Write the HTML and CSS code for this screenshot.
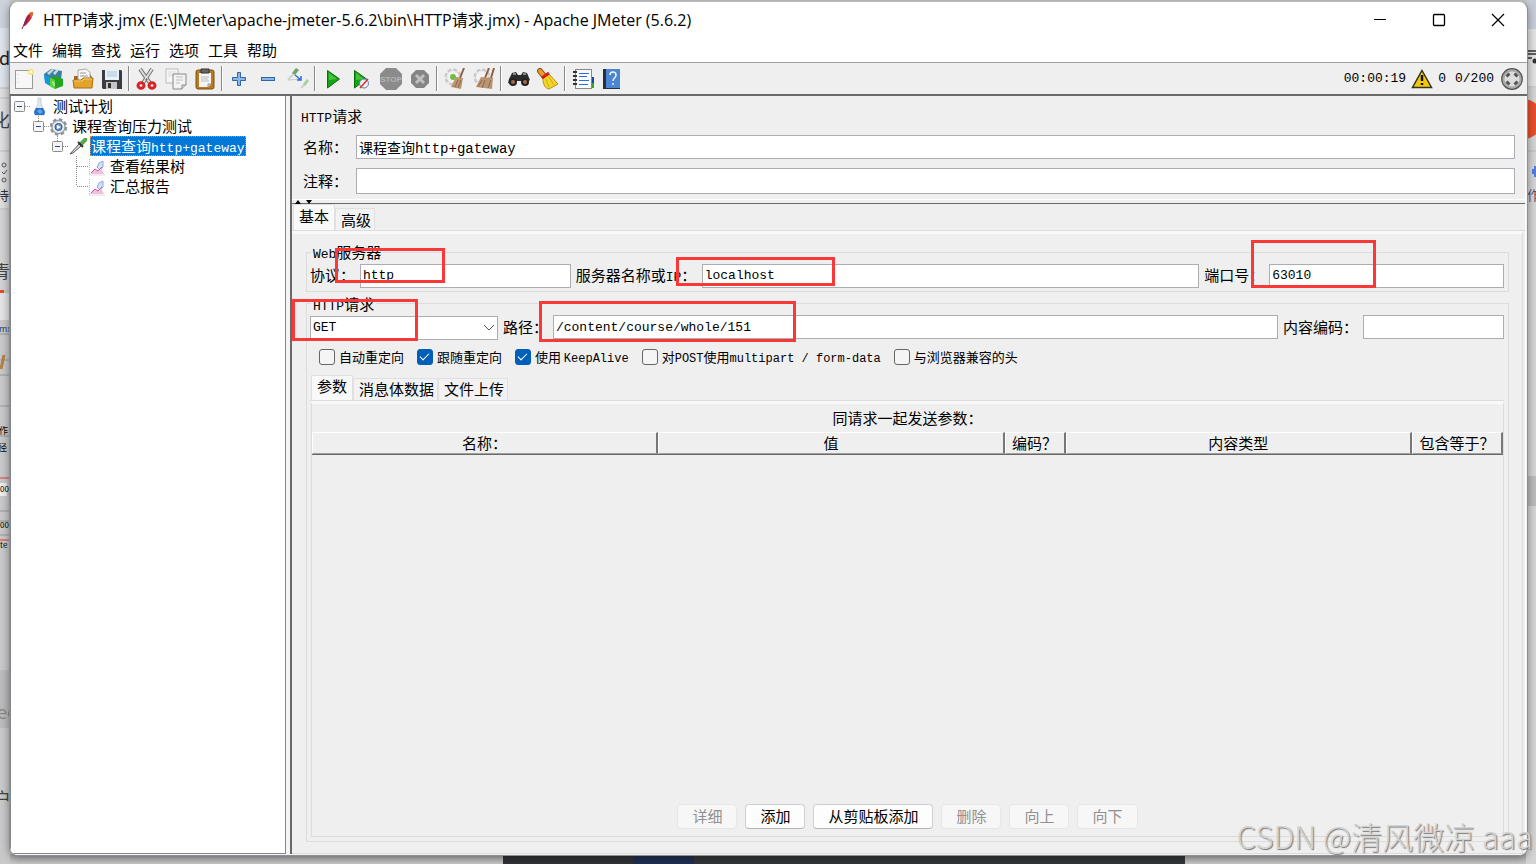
FILE: index.html
```html
<!DOCTYPE html>
<html lang="zh-CN">
<head>
<meta charset="utf-8">
<title>HTTP请求.jmx - Apache JMeter (5.6.2)</title>
<link rel="stylesheet" href="styles.css">
</head>
<body>
<svg class="edge edge-left" width="10" height="864" aria-hidden="true">
  <rect width="10" height="864" fill="#c9c9c9"/>
  <rect width="10" height="28" fill="#cdd2dc"/><rect y="28" width="10" height="60" fill="#dfe3eb"/>
  <rect y="88" width="10" height="122" fill="#dedede"/><path d="M0 88h10M0 98h10M0 151h10M0 209h10" stroke="#bbb"/>
  <rect y="210" width="10" height="80" fill="#d3d3d3"/><rect y="293" width="10" height="27" fill="#e4e4e4"/>
  <rect y="290" width="4" height="3" fill="#e2492f"/>
  <text x="-1" y="65" font-size="18" fill="#222">d</text><text x="-8" y="127" font-size="18" fill="#444">化</text>
  <text x="-4" y="200" font-size="13" fill="#333">待</text><text x="-7" y="278" font-size="17" fill="#444">青</text>
  <g fill="none" stroke="#555"><circle cx="4" cy="165" r="2"/><path d="m2 172 2 2 3-4"/><circle cx="4" cy="180" r="2"/></g>
  <text x="-1" y="332" font-size="9" fill="#24497a">mx</text>
  <path d="M0 334h9M0 360h9M0 375h9M0 406h9M0 436h9M0 511h9M0 521h9M0 535h9" stroke="#999"/>
  <path d="m1 369 3-14" stroke="#b48244" stroke-width="3"/>
  <text x="-1" y="434" font-size="9">作</text><text x="-2" y="451" font-size="9">径</text>
  <rect y="483" width="7" height="13" fill="#eee"/><text x="0" y="492" font-size="8">00</text><text x="0" y="528" font-size="8">00</text>
  <path d="M0 478h9M0 540h9" stroke="#ed3b3b"/><text y="548" font-size="8">te</text>
  <rect y="670" width="10" height="58" fill="#bcbcbc"/><text x="-3" y="719" font-size="18" fill="#888">ee</text>
  <text x="-7" y="806" font-size="18" fill="#444">户</text>
</svg>
<svg class="edge edge-right" width="10" height="864" aria-hidden="true">
  <rect width="10" height="864" fill="#d5d5d5"/><rect width="10" height="29" fill="#c8ced9"/><rect y="29" width="10" height="59" fill="#e3e3e3"/>
  <path d="M1 51h9M1 54h9M1 58h5" stroke="#333" stroke-width="1.5"/><circle cx="9" cy="61" r="2.5" fill="#333"/>
  <path d="M0 87h10M0 151h10" stroke="#bbb"/><circle cx="-3" cy="119" r="20" fill="#e84e2c"/>
  <path d="M7 169v5M9 166v11" stroke="#4f7ee0" stroke-width="2"/><text x="1" y="200" font-size="13" fill="#684a69">作</text>
  <rect y="476" width="10" height="30" fill="#bcbcbc"/>
</svg>
<div class="edge edge-bottom" aria-hidden="true"><span class="dark-sheet"></span></div>

<main class="window">
  <header class="titlebar">
    <svg class="feather" width="18" height="20" viewBox="0 0 18 20"><path d="M5 16c0-5 2-10 6-13l3-1c0 4-2 8-6 12l-2 2z" fill="#c5283d"/><path d="M10 4c1-2 2-2 4-2 0 3-1 4-2 6z" fill="#e5632b"/><path d="M5 16 7 10l3-5-2 7-2 3" fill="#722a7c"/><path d="m3 19 3-7 5-7" fill="none" stroke="#762341"/></svg>
    <h1>HTTP请求.jmx (E:\JMeter\apache-jmeter-5.6.2\bin\HTTP请求.jmx) - Apache JMeter (5.6.2)</h1>
    <div class="caption-buttons">
      <button aria-label="最小化"><svg width="14" height="14"><path d="M1 6.500h12" stroke="#000"/></svg></button>
      <button aria-label="最大化"><svg width="14" height="14"><rect x="1.500" y="1.500" width="11" height="11" rx="1" fill="none" stroke="#000" stroke-width="1.300"/></svg></button>
      <button aria-label="关闭"><svg width="14" height="14"><path d="m1 1 12 12M13 1 1 13" stroke="#000" stroke-width="1.200"/></svg></button>
    </div>
  </header>
  <nav class="menubar"><button>文件</button><button>编辑</button><button>查找</button><button>运行</button><button>选项</button><button>工具</button><button>帮助</button></nav>

  <div class="toolbar">
    <button aria-label="新建"><svg viewBox="0 0 22 22"><rect x="1.500" y="2.500" width="17" height="18" fill="#f7f7f7" stroke="#999"/><path d="M4 6v11" stroke="#ccc" stroke-dasharray="1 3"/><circle cx="17" cy="4" r="3" fill="#f6e46b"/><circle cx="17" cy="4" r="1.500" fill="#fffce0"/></svg></button>
    <button aria-label="模板"><svg viewBox="0 0 22 22"><path d="m1 6 7-5 11 2-1 9-8 4-8-4z" fill="#3a7f9f"/><path d="m4 5 5-4 2 1-5 5zM10 5l4-4 2 1-4 5z" fill="#c7d8de"/><path d="m1 7 6 2v9l-5-3z" fill="#1598d8"/><path d="m7 10 6-2 7 3v7l-8 3-5-3z" fill="#23a51d"/><path d="m7 10 5 2v9l-5-3z" fill="#5bd43d"/><path d="m9 14 2 1v3" stroke="#eee" fill="none"/></svg></button>
    <button aria-label="打开"><svg viewBox="0 0 22 22"><path d="M2 8h4l2-2h10l2 3v9H2z" fill="#9a6a20"/><path d="m6 2 8-1 4 3v9H6z" fill="#f5f5f5" stroke="#aaa"/><path d="M8 5h6M8 8h8" stroke="#999"/><path d="M1 12h8l2-2h10l-1 10H2z" fill="#e2a42c" stroke="#aa7015"/><path d="M2 13h8l2-2h8" stroke="#f6cc6e" fill="none"/></svg></button>
    <button aria-label="保存"><svg viewBox="0 0 22 22"><path d="M1 2h19l1 1v18H2l-1-1z" fill="#3a3c42"/><rect x="4" y="2" width="14" height="10" fill="#e8f1f9"/><path d="M6 4h10M6 6h10M6 8h10" stroke="#acc5d9"/><rect x="5" y="14" width="11" height="7" fill="#c4c5c8"/><rect x="7" y="15" width="3" height="5" fill="#333"/></svg></button>
    <i class="sep"></i>
    <button aria-label="剪切"><svg viewBox="0 0 22 22"><path d="m4 1 10 14M16 1 7 15" stroke="#777" stroke-width="4"/><path d="m4 1 10 14M16 1 7 15" stroke="#ddd" stroke-width="2"/><g fill="none" stroke="#d82227" stroke-width="3"><ellipse cx="5" cy="17.500" rx="3" ry="2.700"/><ellipse cx="16" cy="17.500" rx="3" ry="2.700"/></g><circle cx="10.500" cy="11.500" r="1" fill="#555"/></svg></button>
    <button aria-label="复制"><svg viewBox="0 0 22 22"><path d="M1 1h12v14H1z" fill="#f6f6f6" stroke="#bbb"/><path d="M3 4h8M3 6h8M3 8h8" stroke="#ddd"/><path d="M8 6h13v11l-4 4H8z" fill="#f3f3f3" stroke="#888"/><path d="M11 9h7M11 12h7M11 15h4" stroke="#bbb"/><path d="M17 21v-4h4" fill="#ddd" stroke="#888"/></svg></button>
    <button aria-label="粘贴"><svg viewBox="0 0 22 22"><rect x="2" y="2" width="18" height="19" rx="2" fill="#b97b21" stroke="#825112"/><path d="M5 5h12v11l-3 3H5z" fill="#f5f5f5"/><path d="M7 1h8v4H7z" fill="#666" stroke="#333"/><path d="M7 9h8M7 11h7M7 13h8" stroke="#bbb"/><path d="M14 19v-3h3" fill="#ccc" stroke="#999"/></svg></button>
    <i class="sep"></i>
    <button aria-label="展开"><svg viewBox="0 0 22 22"><path d="M8.500 4.500h3v5h5v3h-5v5h-3v-5h-5v-3h5z" fill="#8db5e5" stroke="#2f65ad"/></svg></button>
    <button aria-label="折叠"><svg viewBox="0 0 22 22"><rect x="3.500" y="9.500" width="13" height="3" fill="#8db5e5" stroke="#2f65ad"/></svg></button>
    <button aria-label="切换"><svg viewBox="0 0 22 22"><path d="M1 12 7 5" stroke="#d0d4ce" stroke-width="2"/><path d="m5 5 4-5 3 2-4 5z" fill="#6aa667"/><path d="m1 12 13-1" stroke="#ccc"/><path d="m8 7 6 5m0-4v4h-4" stroke="#286ee4" fill="none" stroke-width="1.500"/><path d="m14 20 4-4" stroke="#cdd2cb" stroke-width="2"/><path d="m16 16 4-5 2 2-4 5z" fill="#a9cba6"/></svg></button>
    <i class="sep"></i>
    <button aria-label="启动"><svg viewBox="0 0 22 22"><path d="m5.500 2.500 12 8.500-12 9z" fill="#15a315" stroke="#07700b"/><path d="m7 5 8 6-8 1z" fill="#47c33b"/></svg></button>
    <button aria-label="不停顿开始"><svg viewBox="0 0 22 22"><path d="m3.500 2.500 12 8.500-12 9z" fill="#15a315" stroke="#07700b"/><path d="m5 5 8 6-8 1z" fill="#47c33b"/><circle cx="13" cy="15.500" r="4.500" fill="#eaf0f6" stroke="#5481b2"/><path d="m9 20 8-9" stroke="#e22b2b" stroke-width="1.500"/></svg></button>
    <button aria-label="停止" disabled><svg viewBox="0 0 22 22"><path d="M6 0h10l6 6v10l-6 6H6l-6-6V6z" fill="#8b8b8b"/><text x="11" y="14" font-size="8" font-weight="700" text-anchor="middle" fill="#b5b5b5">STOP</text></svg></button>
    <button aria-label="关闭线程" disabled><svg viewBox="0 0 22 22"><path d="M7 2h8l5 5v8l-5 5H7l-5-5V7z" fill="#858585"/><path d="m7 7 8 8m0-8-8 8" stroke="#c0c0c0" stroke-width="3"/></svg></button>
    <i class="sep"></i>
    <button aria-label="清除"><svg viewBox="0 0 22 22"><use href="#gear-pale"/><circle cx="9" cy="9" r="3" fill="#73be3c"/><path d="m20 0-4 10" stroke="#8c6345" stroke-width="2"/><path d="m12 9 7 1-2 11-10-2z" fill="#bb9572"/><path d="m14 12-3 7m6-7-3 8" stroke="#8d6a4d"/></svg></button>
    <button aria-label="清除全部"><svg viewBox="0 0 22 22"><use href="#gear-pale"/><path d="m16 0-4 10M21 0l-3 10" stroke="#8c6345" stroke-width="2"/><path d="m8 9 12 1-1 11-16-2z" fill="#bb9572"/><path d="m9 12-4 7m7-7-3 8m9-8-3 8" stroke="#8d6a4d"/></svg></button>
    <i class="sep"></i>
    <button aria-label="查找"><svg viewBox="0 0 22 22"><path d="m1 11 3-6 4-1 2 3h3l2-3 4 1 3 7-4 3-5-2h-4l-5 3-4-1z" fill="#2c2c2c"/><path d="M5 6h3m7 0h3" stroke="#888" stroke-width="2"/><circle cx="5" cy="14" r="4" fill="#222"/><circle cx="17" cy="14" r="4" fill="#222"/><circle cx="5" cy="14" r="2" fill="#a46a4a"/><circle cx="17" cy="14" r="2" fill="#a46a4a"/></svg></button>
    <button aria-label="重置查找"><svg viewBox="0 0 22 22"><path d="m3 3 4 5" stroke="#8d4b16" stroke-width="6" stroke-linecap="round"/><path d="m3 3 4 5" stroke="#e99d2c" stroke-width="4" stroke-linecap="round"/><path d="M6 10 12 6l9 10-9 5c-5-1-6-6-6-11" fill="#f3d429" stroke="#b79417"/><path d="m5 10 7-5" stroke="#d51f19" stroke-width="3"/><path d="m9 11 3 8m0-10 5 8" stroke="#d4ad18"/></svg></button>
    <i class="sep"></i>
    <button aria-label="函数助手"><svg viewBox="0 0 22 22"><rect x="3.500" y="1.500" width="16" height="19" fill="#fafafa" stroke="#888"/><path d="M1 4h4M1 8h4M1 12h4M1 16h4" stroke="#333" stroke-width="2"/><path d="M7 5.500h10M7 8.500h8M7 12.500h10M7 16.500h9" stroke="#286ee4"/><path d="M21 9v6" stroke="#1746ad" stroke-width="2"/><path d="M21 15v5" stroke="#38a321" stroke-width="2"/></svg></button>
    <button aria-label="帮助"><svg viewBox="0 0 22 22"><path d="M2 1h17v20H2z" fill="#252f3f"/><path d="M5 1h14v19H5z" fill="#4c86d2"/><path d="M9 7c0-4 6-4 6 0 0 3-3 3-3 6m0 2v2" stroke="#e9f3ff" stroke-width="1.500" fill="none"/></svg></button>
    <div class="run-status">
      <span>00:00:19</span>
      <svg width="22" height="20" viewBox="0 0 22 20"><path d="m11 1.500 9.500 17h-19z" fill="#f4c90c" stroke="#313416" stroke-width="1.500"/><path d="M11 6v6m0 2v2" stroke="#111" stroke-width="2.500"/></svg>
      <span>0</span><span>0/200</span>
      <svg class="remote" width="22" height="22" viewBox="0 0 22 22"><circle cx="11" cy="11" r="10.300" fill="#aaa" stroke="#555" stroke-width="1.200"/><circle cx="11" cy="11" r="7.500" fill="#ddd"/><g stroke="#555" stroke-width="3"><path d="m5.500 8.500 3-3M13.500 5.500l3 3M5.500 13.500l3 3M13.500 16.500l3-3"/></g></svg>
    </div>
  </div>

  <div class="workspace">
    <aside class="tree">
      <div class="node"><svg class="branch"><use href="#expander"/></svg><svg class="node-icon" viewBox="0 0 19 20"><path d="M7 2h3v6l4 8-1 3H4l-1-3 4-8z" fill="#dfe8f4" stroke="#c5cedb"/><path d="M5 12h7l2 4-1 3H4l-1-3z" fill="#2873ca"/><path d="m6 15 3-2 3 3-3 2z" fill="#62a6ee"/></svg><span>测试计划</span></div>
      <div class="node level-1"><svg class="branch"><path d="M5.500 0v5" class="dots"/><use href="#expander"/></svg><svg class="node-icon" viewBox="0 0 19 20"><circle cx="8.500" cy="11" r="7.500" fill="#c6cbd1" stroke="#8d9399" stroke-width="2.500" stroke-dasharray="3.500 2.400"/><circle cx="8.500" cy="11" r="6.500" fill="#e6e9ee" stroke="#89929d"/><circle cx="8.500" cy="11" r="3.500" fill="#769bcb" stroke="#31517d"/><path d="m7 9 4 2-4 2z" fill="#fff"/></svg><span>课程查询压力测试</span></div>
      <div class="node level-2"><svg class="branch"><path d="M5.500 0v5" class="dots"/><use href="#expander"/></svg><svg class="node-icon" viewBox="0 0 19 20"><path d="m1 18 9-10 2 2-8 7z" fill="#d5d7d8" stroke="#5a5a5a"/><path d="m10 7 5-5 3 0 0 3-5 5z" fill="#58a84c"/><path d="m9 6 5 5" stroke="#333" stroke-width="2"/></svg><span class="selected">课程查询<b class="latin">http+gateway</b></span></div>
      <div class="node level-3"><svg class="branch"><path d="M5.500 0v20M6 10.500h12" class="dots"/></svg><svg class="node-icon"><use href="#chart"/></svg><span>查看结果树</span></div>
      <div class="node level-3"><svg class="branch"><path d="M5.500 0v10M6 10.500h12" class="dots"/></svg><svg class="node-icon"><use href="#chart"/></svg><span>汇总报告</span></div>
    </aside>

    <section class="editor">
      <div class="identity">
        <h2><b class="latin">HTTP</b>请求</h2>
        <div class="name-row"><label for="name">名称：</label><input id="name" class="mixed" value="课程查询http+gateway"></div>
        <div class="name-row comment"><label for="comment">注释：</label><input id="comment"></div>
      </div>
      <div class="splitter"><svg width="18" height="4"><path d="m1 4 3-4 3 4zM12 0h6l-3 4z"/></svg></div>
      <div class="tabs"><button class="active">基本</button><button>高级</button></div>
      <div class="basic-pane">
        <fieldset>
          <legend><b class="latin">Web</b>服务器</legend>
          <div class="field-row">
            <label for="protocol" class="protocol-label">协议：</label><div class="field protocol"><input id="protocol" value="http"><i class="mark mark-protocol"></i></div>
            <label for="server" class="server-label">服务器名称或<b class="latin">IP</b>：</label><div class="field server"><input id="server" value="localhost"><i class="mark mark-server"></i></div>
            <label for="port" class="port-label">端口号：</label><div class="field port"><input id="port" value="63010"><i class="mark mark-port"></i></div>
          </div>
        </fieldset>
        <fieldset class="request">
          <legend><b class="latin">HTTP</b>请求</legend>
          <div class="field-row">
            <div class="field method"><select aria-label="方法"><option>GET</option></select><svg class="chevron" width="10" height="6"><path d="m0 0 5 5 5-5" fill="none" stroke="#555"/></svg><i class="mark mark-method"></i></div>
            <label for="path" class="path-label">路径：</label><div class="field path"><input id="path" value="/content/course/whole/151"><i class="mark mark-path"></i></div>
            <label for="encoding" class="encoding-label">内容编码：</label><div class="field encoding"><input id="encoding"></div>
          </div>
          <div class="options">
            <label><input type="checkbox">自动重定向</label>
            <label><input type="checkbox" checked>跟随重定向</label>
            <label><input type="checkbox" checked><span>使用 <b class="latin">KeepAlive</b></span></label>
            <label><input type="checkbox"><span>对<b class="latin">POST</b>使用<b class="latin">multipart / form-data</b></span></label>
            <label><input type="checkbox">与浏览器兼容的头</label>
          </div>
          <div class="tabs inner"><button class="active">参数</button><button>消息体数据</button><button>文件上传</button></div>
          <div class="params">
            <p>同请求一起发送参数：</p>
            <table>
              <colgroup><col><col><col class="col-encode"><col><col class="col-equals"></colgroup>
              <thead><tr><th>名称：</th><th>值</th><th>编码？</th><th>内容类型</th><th>包含等于？</th></tr></thead>
            </table>
            <div class="actions"><button disabled>详细</button><button>添加</button><button>从剪贴板添加</button><button disabled>删除</button><button disabled>向上</button><button disabled>向下</button></div>
          </div>
        </fieldset>
      </div>
    </section>
  </div>
</main>
<div class="watermark">CSDN @清风微凉 aaa</div>

<svg width="0" height="0" class="symbols" aria-hidden="true"><defs>
  <g id="expander"><rect x=".5" y="5.500" width="10" height="10" rx="1" fill="#f5f5f5" stroke="#8a8a8a"/><path d="M3 10.500h5" stroke="#25489a"/><path d="M11 10.500h6" stroke="#888" stroke-dasharray="1 1"/></g>
  <g id="chart"><path d="M1.500 3v16H17" stroke="#bbb" stroke-dasharray="1 1" fill="none"/><path d="m9 11 2-4 4-2v6l-3 3z" fill="#cfe0f7" stroke="#8fabdb"/><path d="m2 18 5-5 3 2 3-3 3 6z" fill="#f3c0e0"/><path d="m3 17 4-4 3 2 4-4" stroke="#cf5799" fill="none"/></g>
  <g id="gear-pale"><circle cx="9" cy="9" r="7" fill="#f2f2f2" stroke="#c6c6c6" stroke-width="3" stroke-dasharray="3.500 2"/><circle cx="9" cy="9" r="6.500" fill="#f2f2f2" stroke="#d2d2d2"/></g>
</defs></svg>
</body>
</html>
```

FILE: styles.css
```css
* { box-sizing: border-box; }
body {
  margin: 0; height: 100vh; min-height: 600px; display: flex; padding: 1px 8px 8px 9px;
  position: relative; overflow: hidden; background: #c9c9c9; color: #000;
  font: 15px/20px "Noto Sans CJK SC", sans-serif;
}
button, input, select { font: inherit; color: inherit; margin: 0; }
button { padding: 0; border: 0; background: none; }
h1, h2, p { margin: 0; font-weight: 400; }
svg { display: block; flex: none; }
.latin { font: 400 13px/1 "Liberation Mono", monospace; }
.edge { position: absolute; top: 0; }
.edge-left { left: 0; }
.edge-right { right: 0; }
.edge-bottom { top: auto; bottom: 0; left: 10px; right: 10px; height: 10px; background: linear-gradient(#aaa, #c9c9c9); }
.dark-sheet { display: block; width: 45%; height: 10px; margin-left: 32.5%; background: linear-gradient(90deg, #303236 19%, #202f52 19% 28%, #34373a 28%); }
.symbols { position: absolute; }

.window {
  position: relative; flex: 1; min-width: 0; display: flex; flex-direction: column; overflow: hidden;
  background: #fff; border: 1px solid #8d8d92; border-top-color: #bbb; border-radius: 9px;
  box-shadow: 0 2px 8px #0006;
}
.titlebar { display: flex; align-items: center; height: 36px; padding-left: 9px; }
.titlebar h1 { flex: 1; margin-left: 6px; font: 16px/20px "Open Sans", "Noto Sans CJK SC", sans-serif; white-space: nowrap; }
.caption-buttons { display: flex; }
.caption-buttons button { width: 59px; height: 34px; display: grid; place-items: center; }
.menubar { display: flex; gap: 9px; height: 24px; padding: 0 3px; line-height: 24px; }
.toolbar { display: flex; align-items: center; height: 34px; border-top: 1px solid #a0a0a0; border-bottom: 2px solid #696969; background: #efefef; }
.toolbar button { width: 29px; height: 28px; display: grid; place-items: center; }
.toolbar button svg { width: 22px; height: 22px; font-family: "Liberation Sans", sans-serif; }
.sep { width: 6px; height: 25px; background: linear-gradient(90deg, transparent 2px, #888 2px 3px, #fff 3px 4px, transparent 4px); }
.run-status { display: flex; align-items: center; gap: 5px; margin-left: auto; margin-right: 4px; font: 13px/20px "Liberation Mono", monospace; }
.run-status .remote { margin-left: 2px; }
.run-status span + span { margin-left: 4px; }

.workspace { flex: 1; min-height: 0; display: flex; gap: 4px; padding: 0 1px 1px 0; background: #f4f4f4; }
.tree { width: 18.200%; max-width: 277px; flex: none; background: #fff; border: 1px solid #828790; border-top: 0; padding-left: 3px; white-space: nowrap; }
.node { display: flex; align-items: center; height: 20px; }
.level-1 { padding-left: 19px; }
.level-2 { padding-left: 38px; }
.level-3 { padding-left: 57px; }
.branch { width: 17px; height: 20px; }
.node-icon { width: 19px; height: 20px; margin-right: 2px; }
.dots { fill: none; stroke: #888; stroke-dasharray: 1 1; }
.node span { padding: 0 1px; }
.node .selected { background: #0078d7; color: #fff; outline: 1px dotted #f08a28; outline-offset: -1px; }

.editor { flex: 1; min-width: 0; display: flex; flex-direction: column; background: #efefef; border-left: 2px solid #696969; border-right: 1px solid #fff; }
.identity { padding: 10px 10px 5px 9px; border-bottom: 1px solid #fff; }
.identity h2 { height: 20px; font-size: 15px; line-height: 20px; }
.name-row { display: flex; align-items: center; margin-top: 9px; }
.name-row label { width: 55px; padding-left: 2px; }
.name-row input { flex: 1; }
.name-row.comment input { height: 26px; }
input:not([type]), select { width: 100%; min-width: 0; height: 24px; padding: 0 2px; border: 1px solid #abadb3; border-radius: 0; background: #fff; font: 13px/20px "Liberation Mono", "Noto Sans CJK SC", monospace; outline: 0; }
.name-row .mixed { font-size: 14px; }
.splitter { height: 4px; padding-left: 2px; border-bottom: 1px solid #696969; }

.tabs { display: flex; align-items: flex-end; height: 27px; padding: 0 1px; border-bottom: 1px solid #dcdcdc; }
.tabs button { height: 22px; padding: 0 3px 0 5px; border: 1px solid #e0e0e0; border-bottom: 0; background: #f2f2f2; }
.tabs .active { height: 26px; padding: 0 5px 4px; background: #f9f9f9; }
.basic-pane { flex: 1; min-height: 0; display: flex; flex-direction: column; gap: 2px; margin-right: 2px; padding: 8px 13px 11px 14px; border: solid #dcdcdc; border-width: 3px 1px 1px 0; border-top-color: #f9f9f9; }
fieldset { min-width: 0; margin: 0; padding: 1px 4px 3px 3px; border: 1px solid #dcdcdc; }
legend { height: 20px; margin-left: 1px; padding: 0 2px; line-height: 20px; }
.request { flex: 1; display: flex; flex-direction: column; }
.field-row { display: flex; align-items: center; }
.field-row label { height: 20px; white-space: nowrap; flex: none; }
.field { position: relative; }
.protocol-label { width: 50px; }
.protocol { flex: 211; }
.server-label { width: 131px; padding-left: 5px; }
.server { flex: 498; }
.port-label { width: 70px; padding-left: 5px; }
.port { flex: 235; }
.method { flex: 188; }
.method select { appearance: none; padding: 0 2px; }
.chevron { position: absolute; right: 4px; top: 10px; }
.path-label { width: 55px; padding-left: 5px; }
.path { flex: 725; }
.encoding-label { width: 85px; padding-left: 5px; }
.encoding { flex: 141; }
.mark { position: absolute; z-index: 2; border: 3px solid #fa3838; pointer-events: none; }
.mark-protocol { left: -25px; top: -15px; width: 110px; height: 35px; }
.mark-server { left: -26px; top: -6px; width: 159px; height: 29px; }
.mark-port { left: -18px; top: -23px; width: 125px; height: 48px; }
.mark-method { left: -18px; top: -16px; width: 126px; height: 42px; }
.mark-path { left: -14px; top: -14px; width: 257px; height: 41px; }

.options { display: flex; gap: 13px; height: 36px; padding: 8px 9px 10px; font-size: 13px; line-height: 18px; white-space: nowrap; }
.options label { display: flex; align-items: center; gap: 4px; }
.options .latin { font-size: 12px; }
.options input { appearance: none; width: 16px; height: 16px; border: 1px solid #666; border-radius: 3px; background: #f5f5f5; }
.options input:checked { border-color: #005fb8; background: #005fb8; display: grid; place-items: center; }
.options input:checked::before { content: ""; width: 8px; height: 4px; margin-bottom: 3px; border: solid #fff; border-width: 0 0 1px 1px; rotate: -45deg; }
.tabs.inner { height: 25px; }
.inner .active { height: 25px; padding: 0 5px 4px; }
.params { flex: 1; min-height: 0; display: flex; flex-direction: column; margin: 0 0 1px 1px; border: 1px solid #dcdcdc; border-top: 3px solid #f9f9f9; }
.params p { margin-top: 4px; line-height: 20px; text-align: center; }
table { width: 100%; margin-top: 4px; table-layout: fixed; border-collapse: separate; border-spacing: 0; border-bottom: 1px solid #696969; }
th { height: 22px; padding: 0; font-weight: 400; line-height: 18px; border: solid; border-width: 1px 2px 1px 1px; border-color: #fff #777 #a0a0a0 #fff; }
.col-encode { width: 61px; }
.col-equals { width: 91px; }
.actions { display: flex; justify-content: center; gap: 8px; margin-top: auto; padding-bottom: 7px; }
.actions button { min-width: 60px; height: 25px; padding: 0 14px 2px; border: 1px solid #cfcfcf; border-bottom-color: #b5b5b5; border-radius: 4px; background: #fdfdfd; }
.actions button:disabled { color: #909090; border-color: #e6e6e6; background: #f7f7f7; }
.watermark { position: absolute; right: 3px; bottom: 8px; z-index: 3; font: 300 31px/40px "Noto Sans CJK SC", sans-serif; color: #d3d3d3; text-shadow: 1px 1px 1px #777; white-space: nowrap; }
```
